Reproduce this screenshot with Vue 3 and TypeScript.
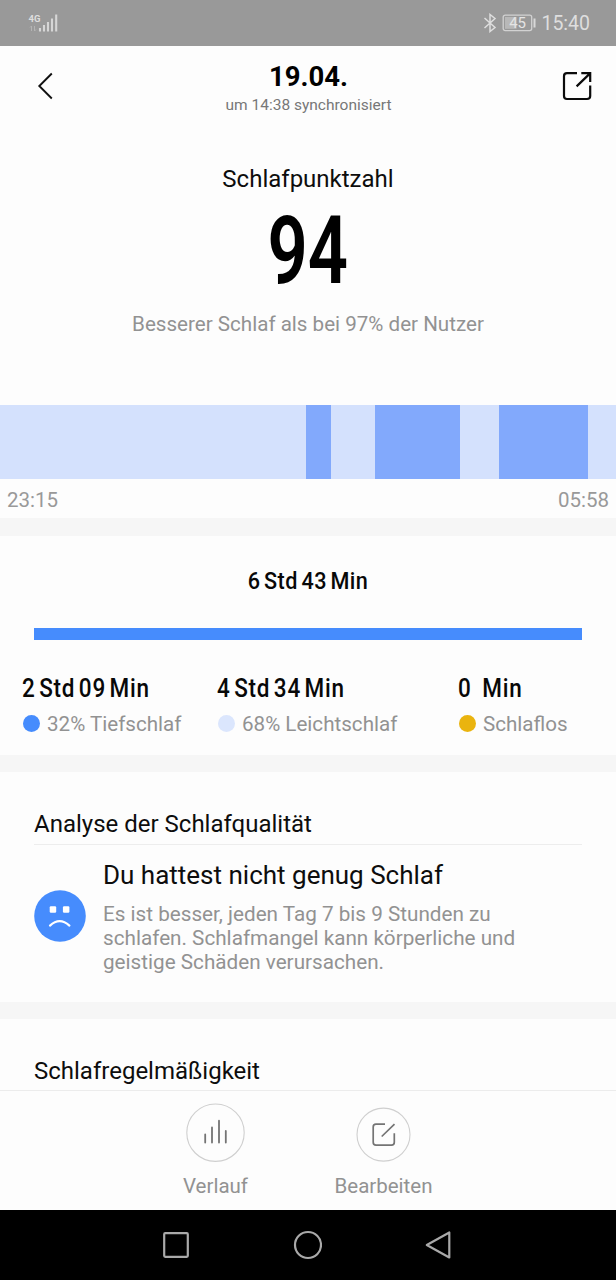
<script setup lang="ts">
interface Phase { deep: boolean; width: number }
interface Stat { words: string[]; label: string; color: string; kind: string }

const phases: Phase[] = [
  { deep: false, width: 306.3 },
  { deep: true, width: 24.6 },
  { deep: false, width: 44.4 },
  { deep: true, width: 84.4 },
  { deep: false, width: 39.6 },
  { deep: true, width: 89 },
  { deep: false, width: 27.7 },
]

const total: string[] = ['6', 'Std', '43', 'Min']

const stats: Stat[] = [
  { words: ['2', 'Std', '09', 'Min'], label: '32% Tiefschlaf', color: '#468cfd', kind: 'deep' },
  { words: ['4', 'Std', '34', 'Min'], label: '68% Leichtschlaf', color: '#dbe6fd', kind: 'light' },
  { words: ['0', 'Min'], label: 'Schlaflos', color: '#eab40f', kind: 'awake' },
]
</script>

<template>
  <div class="screen">
    <div class="status">
      <svg class="signal" width="32" height="20" viewBox="0 0 32 20">
        <text x="0.5" y="9" class="net">4G</text>
        <path d="M3.5 18v-5M2 14.5l1.5-1.5M6.5 13v5M8 16.500l-1.500 1.500" stroke="#b4b4b4" fill="none" />
        <path d="M12 15v3.500M16 12v6.500M20 9v9.500M24 5.500v13M28.200 1.500v17" stroke="#d6d6d6" stroke-width="2.100" fill="none" />
      </svg>
      <div class="status-right">
        <svg class="bt" width="14" height="20" viewBox="0 0 14 20">
          <path d="M1.500 5L12 14.500L7 18.500V1.500L12 5.500L1.500 15" fill="none" stroke="#dedede" stroke-width="1.500" />
        </svg>
        <svg class="battery" width="35" height="18" viewBox="0 0 35 18">
          <rect x="1.200" y="1.200" width="28.500" height="15.400" rx="2" fill="none" stroke="#d2d2d2" stroke-width="1.300" />
          <rect x="3" y="3" width="11.500" height="11.800" fill="#b8b8b8" />
          <path d="M32.500 4.500v9" stroke="#d8d8d8" stroke-width="2" />
          <text x="15.600" y="14.200" text-anchor="middle" class="level">45</text>
        </svg>
        <span class="clock">15:40</span>
      </div>
    </div>

    <header class="head">
      <svg class="back" width="20" height="30" viewBox="0 0 20 30">
        <path d="M15.800 2.500L3.300 15L15.800 27.500" fill="none" stroke="#111" stroke-width="1.900" />
      </svg>
      <div class="head-text">
        <div class="date"><span>19.04.</span></div>
        <div class="sync"><span>um 14:38 synchronisiert</span></div>
      </div>
      <svg class="share" width="32" height="32" viewBox="0 0 32 32">
        <path d="M16 3.200H6Q3 3.200 3 6.200V26Q3 29 6 29H26Q29.200 29 29.200 26V15.500M20.300 3.200H29.200V12M28.800 3.600L15.600 16.400" fill="none" stroke="#0b0b0b" stroke-width="2.200" />
      </svg>
    </header>

    <section class="score">
      <div class="score-title"><span>Schlafpunktzahl</span></div>
      <div class="score-value"><span>94</span></div>
      <div class="score-note"><span>Besserer Schlaf als bei 97% der Nutzer</span></div>
    </section>

    <div class="chart">
      <div v-for="(p, i) in phases" :key="i" class="phase" :class="{ deep: p.deep }" :style="{ flexGrow: p.width }"></div>
    </div>
    <div class="times"><span>23:15</span><span>05:58</span></div>
    <div class="divider d1"></div>

    <section class="breakdown">
      <div class="total"><div class="din"><span v-for="w in total" :key="w">{{ w }}</span></div></div>
      <div class="bar"></div>
      <div class="stats">
        <div v-for="s in stats" :key="s.kind" class="stat" :class="s.kind">
          <div class="din big"><span v-for="w in s.words" :key="w">{{ w }}</span></div>
          <div class="legend"><i :style="{ background: s.color }"></i><span>{{ s.label }}</span></div>
        </div>
      </div>
    </section>
    <div class="divider d2"></div>

    <section class="quality">
      <h2><span>Analyse der Schlafqualität</span></h2>
      <div class="advice">
        <svg class="face" width="52" height="52" viewBox="0 0 52 52">
          <circle cx="26" cy="26" r="25.800" fill="#468cfd" />
          <rect x="15.700" y="16.200" width="6.500" height="6.500" rx="1.200" fill="#fff" />
          <rect x="28.900" y="16.200" width="6.500" height="6.500" rx="1.200" fill="#fff" />
          <path d="M16 35.600Q25.600 26.800 35.400 35.600" fill="none" stroke="#fff" stroke-width="2.200" stroke-linecap="round" />
        </svg>
        <div class="advice-text">
          <h3><span>Du hattest nicht genug Schlaf</span></h3>
          <p><span>Es ist besser, jeden Tag 7 bis 9 Stunden zu<br />schlafen. Schlafmangel kann körperliche und<br />geistige Schäden verursachen.</span></p>
        </div>
      </div>
    </section>
    <div class="divider d3"></div>

    <section class="regularity"><h2><span>Schlafregelmäßigkeit</span></h2></section>

    <div class="actions">
      <div class="action history">
        <svg width="60" height="60" viewBox="0 0 60 60">
          <circle cx="29.500" cy="29.700" r="28.700" fill="none" stroke="#cfcfcf" stroke-width="1.100" />
          <path d="M19.200 31.500v8M26 24.500v15M33 17.700v21.800M39.800 28v11.500" stroke="#747474" stroke-width="1.800" stroke-linecap="round" />
        </svg>
        <span>Verlauf</span>
      </div>
      <div class="action edit">
        <svg width="60" height="60" viewBox="0 0 60 60">
          <circle cx="29.500" cy="31.600" r="26.500" fill="none" stroke="#cfcfcf" stroke-width="1.100" />
          <path d="M31 21.200H22Q19.200 21.200 19.200 24V39.300Q19.200 42.200 22 42.200H37.500Q40.300 42.200 40.300 39.300V30.200M27.700 33.500L40.500 21.200" fill="none" stroke="#747474" stroke-width="1.700" />
        </svg>
        <span>Bearbeiten</span>
      </div>
    </div>

    <nav class="nav">
      <svg width="28" height="30" viewBox="0 0 28 30"><rect x="2.200" y="3.200" width="23.600" height="23.600" rx="1" /></svg>
      <svg width="30" height="30" viewBox="0 0 30 30"><circle cx="16" cy="15" r="13" /></svg>
      <svg width="28" height="30" viewBox="0 0 28 30"><path d="M25.300 2.500V27.500L2.800 15Z" stroke-linejoin="round" /></svg>
    </nav>
  </div>
</template>

<style>
body { margin: 0; background: #fdfdfd; }
</style>

<style scoped>
.screen {
  width: 616px;
  height: 1280px;
  overflow: hidden;
  display: flex;
  flex-direction: column;
  background: #fdfdfd;
  color: #0d0d0d;
  font-family: Roboto, "Liberation Sans", sans-serif;
}
.screen > * { flex-shrink: 0; box-sizing: border-box; }
svg { display: block; flex-shrink: 0; }
h2, h3, p { margin: 0; font-weight: 400; }

.status { height: 46px; background: #999; display: flex; justify-content: space-between; align-items: center; padding: 0 26px 0 28px; }
.net { font: 700 9.500px Roboto, sans-serif; fill: #dedede; }
.level { font: 400 15px Roboto, sans-serif; fill: #e4e4e4; }
.status-right { display: flex; align-items: center; }
.battery { margin-left: 5px; }
.clock { margin-left: 4px; font-size: 19.500px; line-height: 44px; padding-top: 2px; color: #dedede; }

.head { height: 84px; display: flex; align-items: flex-start; justify-content: space-between; padding: 0 23px 0 36px; }
.back { margin-top: 25px; }
.share { margin-top: 24px; }
.head-text { text-align: center; padding-top: 15px; }
.date { font-size: 27.500px; line-height: 32px; font-weight: 700; color: #000; }
.sync { font-size: 15.500px; line-height: 25px; color: #777; }

.score { height: 275px; text-align: center; padding-top: 29px; }
.score-title { font-size: 24px; line-height: 40px; }
.score-value { font-size: 94px; line-height: 104px; padding-bottom: 1px; font-weight: 600; color: #000; }
.score-value span { display: inline-block; transform: scaleX(0.75); }
.score-note { font-size: 20.600px; line-height: 40px; color: #929292; }

.chart { height: 74px; display: flex; }
.phase { flex: 1 1 0; background: #d4e1fd; }
.phase.deep { background: #82a9fc; }
.times { height: 39px; padding: 1px 7px 0; display: flex; justify-content: space-between; font-size: 20.500px; line-height: 41px; color: #999; }
.divider { background: #f6f6f6; }
.d1 { height: 18px; }
.d2 { height: 17px; }
.d3 { height: 17px; }

.breakdown { height: 219px; padding-top: 30px; }
.din { display: flex; gap: 4px; font-size: 24px; line-height: 30px; font-weight: 500; letter-spacing: 0.500px; color: #080808; transform: scaleX(0.9); }
.total { display: flex; justify-content: center; }
.bar { height: 12px; margin: 32px 34px 0; background: #468cfd; }
.stats { display: flex; padding-left: 22px; margin-top: 34px; }
.stat { width: 195px; flex: none; }
.stat.light { width: 241px; }
.stat.awake { width: 150px; }
.big { font-size: 25px; transform-origin: left; letter-spacing: 0.850px; }
.awake .big { gap: 12px; }
.legend { display: flex; align-items: center; height: 40px; color: #929292; font-size: 20.600px; white-space: nowrap; }
.legend i { width: 17px; height: 17px; border-radius: 50%; margin: -2px 7px 0 1px; }

.quality { height: 230px; padding: 32px 34px 0; }
h2 { font-size: 24px; line-height: 40px; }
.quality h2 { height: 40px; border-bottom: 1px solid #ededed; }
.advice { display: flex; gap: 17px; }
.face { margin-top: 45px; }
h3 { font-size: 26px; line-height: 36px; margin-top: 12px; }
p { font-size: 20.700px; line-height: 24px; margin-top: 9px; color: #929292; white-space: nowrap; }

.regularity { height: 71px; padding: 32px 34px 0; }
.actions { height: 120px; border-top: 1px solid #ececec; display: flex; justify-content: center; padding: 12px 17px 0 0; }
.action { width: 168px; display: flex; flex-direction: column; align-items: center; font-size: 20.500px; line-height: 46px; color: #929292; }

.nav { height: 70px; background: #000; display: flex; justify-content: space-between; align-items: center; padding: 0 164px 0 162px; }
.nav svg { fill: none; stroke: #a9a9a9; stroke-width: 2.200; }
</style>
